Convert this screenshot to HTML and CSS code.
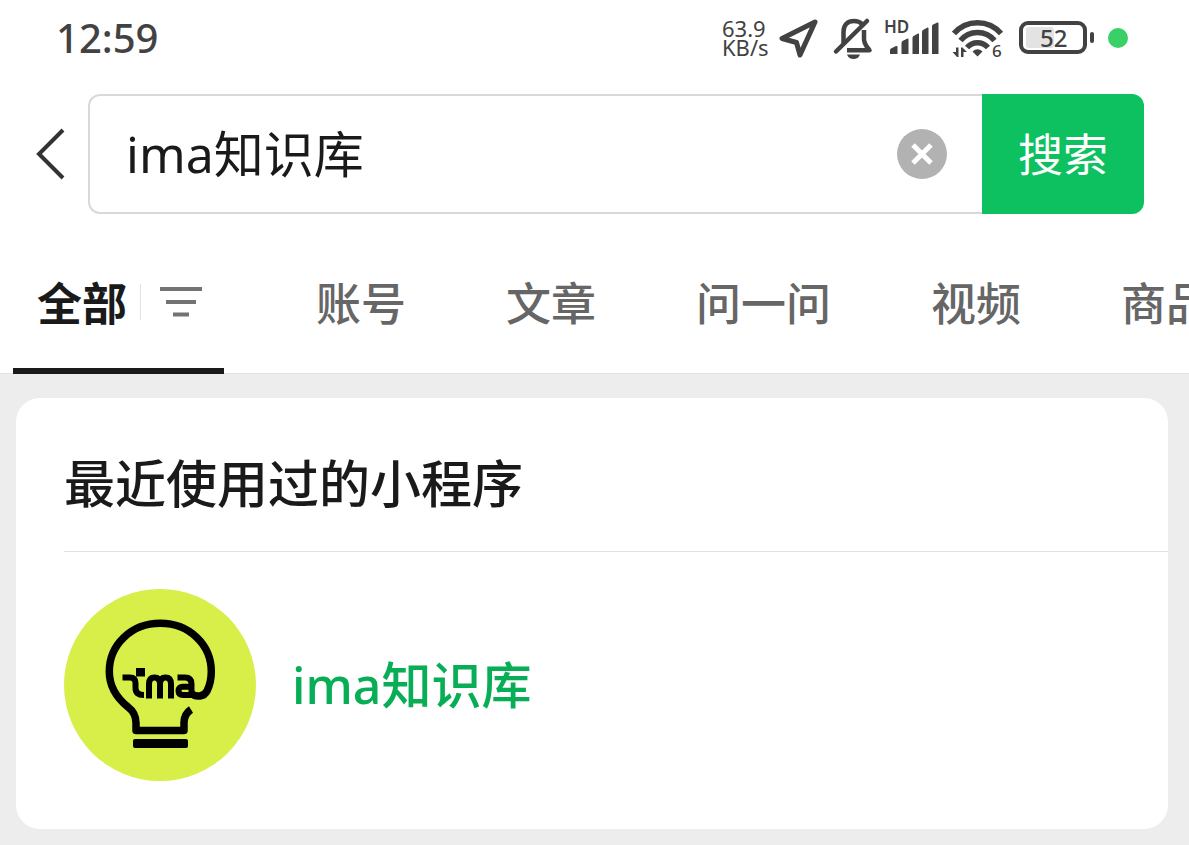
FILE: index.html
```html
<!DOCTYPE html>
<html lang="zh-CN">
<head>
<meta charset="utf-8">
<meta name="viewport" content="width=device-width, initial-scale=1">
<title>ima知识库</title>
<link rel="stylesheet" href="styles.css">
</head>
<body>
<header class="top">
  <div class="status">
    <time class="clock">12:59</time>
    <div class="indicators">
      <div class="speed"><span>63.9</span><span>KB/s</span></div>
      <svg class="ind" width="44" height="48" viewBox="0 0 44 48" aria-hidden="true">
        <path d="M37 8 4 24.500l14.500 4L22 41z" fill="none" stroke="currentColor" stroke-width="5" stroke-linejoin="round"/>
      </svg>
      <svg class="ind" width="46" height="48" viewBox="0 0 46 48" aria-hidden="true">
        <g fill="none" stroke="currentColor" stroke-width="4.500" stroke-linecap="round" stroke-linejoin="round">
          <path d="M6 37.500 37 7"/>
          <path d="M13.500 30v-12C13.500 10.500 18 7 24 7c3.500 0 6 1 8 3" stroke-linecap="butt"/>
          <path d="M34 16v9c0 5 2 6.500 5.500 11.300H17" stroke-linecap="butt"/>
        </g>
        <path d="M17 40.500h13c-1 3-3.500 4.500-6.500 4.500S18 43.500 17 40.500z" fill="currentColor"/>
      </svg>
      <svg class="ind" width="60" height="48" viewBox="0 0 60 48" role="img" aria-label="HD">
        <text class="hd" x="0" y="19">HD</text>
        <g fill="currentColor">
          <path d="M6 36q0-1 1-1.500L12 32q1.500-.5 1.500 1v7H6zM17.500 29q0-1.500 1-2l5-2.500q1-.5 1 1V40h-7zM28.500 24q0-1.500 1-2l4.500-2.500q1-.5 1 1V40h-6.500zM38 18q0-1.500 1-2l4.500-2.500q1-.5 1 1V40H38zM48 12.500q0-1.500 1-2L53.500 8.500q1-.5 1 1V40H48z"/>
        </g>
      </svg>
      <svg class="ind" width="58" height="48" viewBox="0 0 58 48" aria-hidden="true">
        <g fill="none" stroke="currentColor" stroke-width="5.500">
          <path d="M2 19.500A31 31 0 0 1 49 19.500"/>
          <path d="M8.500 26.500A22 22 0 0 1 42.500 26.500"/>
          <path d="M15 33.500A14 14 0 0 1 36 33.500"/>
        </g>
        <path d="M20.500 37.500q5-4.500 10 0l-5 5zM4 33.500h2.500v9.500H5L.5 38H4zM9 43v-9.500h1.500L15 38h-3.500v5z" fill="currentColor"/>
        <text class="gen" x="40" y="43">6</text>
      </svg>
      <svg class="ind" width="80" height="48" viewBox="0 0 80 48" role="img" aria-label="52">
        <rect x="8" y="13" width="28" height="21" rx="3" fill="#e3e3e3"/>
        <rect x="3" y="9" width="64" height="29" rx="7" fill="none" stroke="currentColor" stroke-width="4"/>
        <rect x="72" y="18" width="4" height="11" rx="2" fill="currentColor"/>
        <text class="level" x="22" y="33">52</text>
      </svg>
      <svg width="24" height="48" viewBox="0 0 24 48" aria-hidden="true"><circle cx="12" cy="24" r="10" fill="#39d167"/></svg>
    </div>
  </div>
  <form class="search">
    <button class="back" type="button" aria-label="返回">
      <svg width="30" height="54" viewBox="0 0 30 54" aria-hidden="true"><path d="M28 3 4 27l24 24" fill="none" stroke="currentColor" stroke-width="4"/></svg>
    </button>
    <div class="field">
      <input class="query" type="text" value="ima知识库" aria-label="搜索内容">
      <button class="clear" type="button" aria-label="清除">
        <svg width="50" height="50" viewBox="0 0 50 50" aria-hidden="true"><circle cx="25" cy="25" r="25" fill="#b2b2b2"/><path d="m16 16 18 18m0-18L16 34" stroke="#fff" stroke-width="5"/></svg>
      </button>
    </div>
    <button class="submit" type="submit">搜索</button>
  </form>
  <nav class="tabs">
    <div class="tab-active">
      <a class="tab current" href="#all">全部</a>
      <button class="filter" type="button" aria-label="筛选">
        <svg width="42" height="32" viewBox="0 0 42 32" aria-hidden="true"><path d="M0 3h42M6 16h30M13 28.500h16" stroke="#737373" stroke-width="4"/></svg>
      </button>
    </div>
    <a class="tab" href="#accounts">账号</a>
    <a class="tab" href="#articles">文章</a>
    <a class="tab" href="#ask">问一问</a>
    <a class="tab" href="#videos">视频</a>
    <a class="tab" href="#goods">商品</a>
  </nav>
</header>
<main class="results">
  <section class="card">
    <h1 class="heading">最近使用过的小程序</h1>
    <a class="app" href="#ima">
      <svg class="avatar" width="192" height="192" viewBox="0 0 192 192" aria-hidden="true">
        <circle cx="96" cy="96" r="96" fill="#d7ef48"/>
        <g fill="none" stroke="#000" stroke-width="7.500">
          <path d="M127 120.500Q120 125 120 134V141.500H72V134Q72 124 64 118C54 110 45.300 98 45.300 82.500C45.300 56 67 34.300 96.300 34.300S147.300 56 147.300 82.500C147.300 91 146 96 143 102C140 108 132 108.500 127.500 104.500" stroke-linejoin="round"/>
          <g stroke-width="6">
            <path d="M58.500 88.500H66Q71.500 88.500 71.500 94V99Q71.500 106 80 106"/>
            <path d="M85 109.500V95Q85 88.500 90.500 88.500T96 95V109.500M96 95Q96 88.500 101.500 88.500T107 95V109.500"/>
            <path d="M113.500 88.500H121Q127.500 88.500 127.500 95V106H119Q114.500 106 114.500 101.800T119 97.800H127"/>
          </g>
        </g>
        <path d="M72 79h9v8.500h-9zM71 150h51q2 0 2 2v5q0 2-2 2H71q-2 0-2-2v-5q0-2 2-2z"/>
      </svg>
      <span class="app-name">ima知识库</span>
    </a>
  </section>
</main>
</body>
</html>
```
FILE: styles.css
```css
* { box-sizing: border-box; }

body {
  margin: 0;
  min-height: 100vh;
  background: #ededed;
  color: #1a1a1a;
  font-family: "Noto Sans", "Noto Sans CJK SC", sans-serif;
  overflow-x: hidden;
}

button {
  border: 0;
  padding: 0;
  background: none;
  color: inherit;
  font: inherit;
  cursor: pointer;
}

a { color: inherit; text-decoration: none; }
svg { display: block; flex: none; }

.top { background: #fff; }

.status {
  display: flex;
  align-items: center;
  justify-content: space-between;
  height: 76px;
  padding: 0 59px 0 56px;
  color: #424242;
}

.clock { font-size: 40px; font-weight: 500; line-height: 48px; }

.indicators { display: flex; align-items: center; gap: 8px; }

.speed {
  display: flex;
  flex-direction: column;
  width: 48px;
  font-size: 22px;
  font-weight: 400;
  line-height: 19px;
}

.hd { font-size: 17px; font-weight: 600; fill: currentColor; }
.gen { font-size: 17px; font-weight: 500; fill: currentColor; }
.level { font-size: 24px; font-weight: 500; fill: currentColor; }

.search {
  display: flex;
  align-items: center;
  padding: 18px 45px 0 35px;
}

.back { width: 53px; color: #333; }

.field {
  display: flex;
  flex: 1;
  align-items: center;
  height: 120px;
  min-width: 0;
  padding: 0 35px 0 36px;
  border: 2px solid #d9d9d9;
  border-right: 0;
  border-radius: 12px 0 0 12px;
}

.query {
  flex: 1;
  min-width: 0;
  height: 80px;
  padding: 0 0 6px;
  border: 0;
  outline: 0;
  background: none;
  color: #1a1a1a;
  font: inherit;
  font-size: 50px;
}

.submit {
  width: 162px;
  height: 120px;
  padding-bottom: 4px;
  border-radius: 0 12px 12px 0;
  background: #0dc160;
  color: #fff;
  font-size: 45px;
}

.tabs {
  display: flex;
  gap: 100px;
  height: 160px;
  padding-left: 13px;
  box-shadow: inset 0 -1px #e2e2e2;
  overflow: hidden;
}

.tab {
  flex: none;
  padding-top: 57px;
  color: #666;
  font-size: 45px;
  font-weight: 500;
  line-height: 66px;
  white-space: nowrap;
}

.current { color: #1a1a1a; font-weight: 700; }

.tab-active {
  display: flex;
  flex: none;
  width: 211px;
  margin-right: -8px;
  padding-left: 24px;
  border-bottom: 6px solid #1a1a1a;
}

.filter {
  align-self: flex-start;
  height: 36px;
  margin: 70px 0 0 13px;
  padding-left: 19px;
  border-left: 1px solid #e2e2e2;
}

.results { padding: 24px 21px 16px 16px; }

.card {
  padding-left: 48px;
  border-radius: 24px;
  background: #fff;
}

.heading {
  margin: 0;
  padding: 50px 0 33px;
  border-bottom: 1px solid #e2e2e2;
  font-size: 51px;
  font-weight: 500;
  line-height: 70px;
}

.app {
  display: flex;
  align-items: center;
  gap: 36px;
  padding: 37px 0 48px;
}

.app-name {
  padding-bottom: 6px;
  color: #07ae56;
  font-size: 50px;
  font-weight: 500;
}
```
